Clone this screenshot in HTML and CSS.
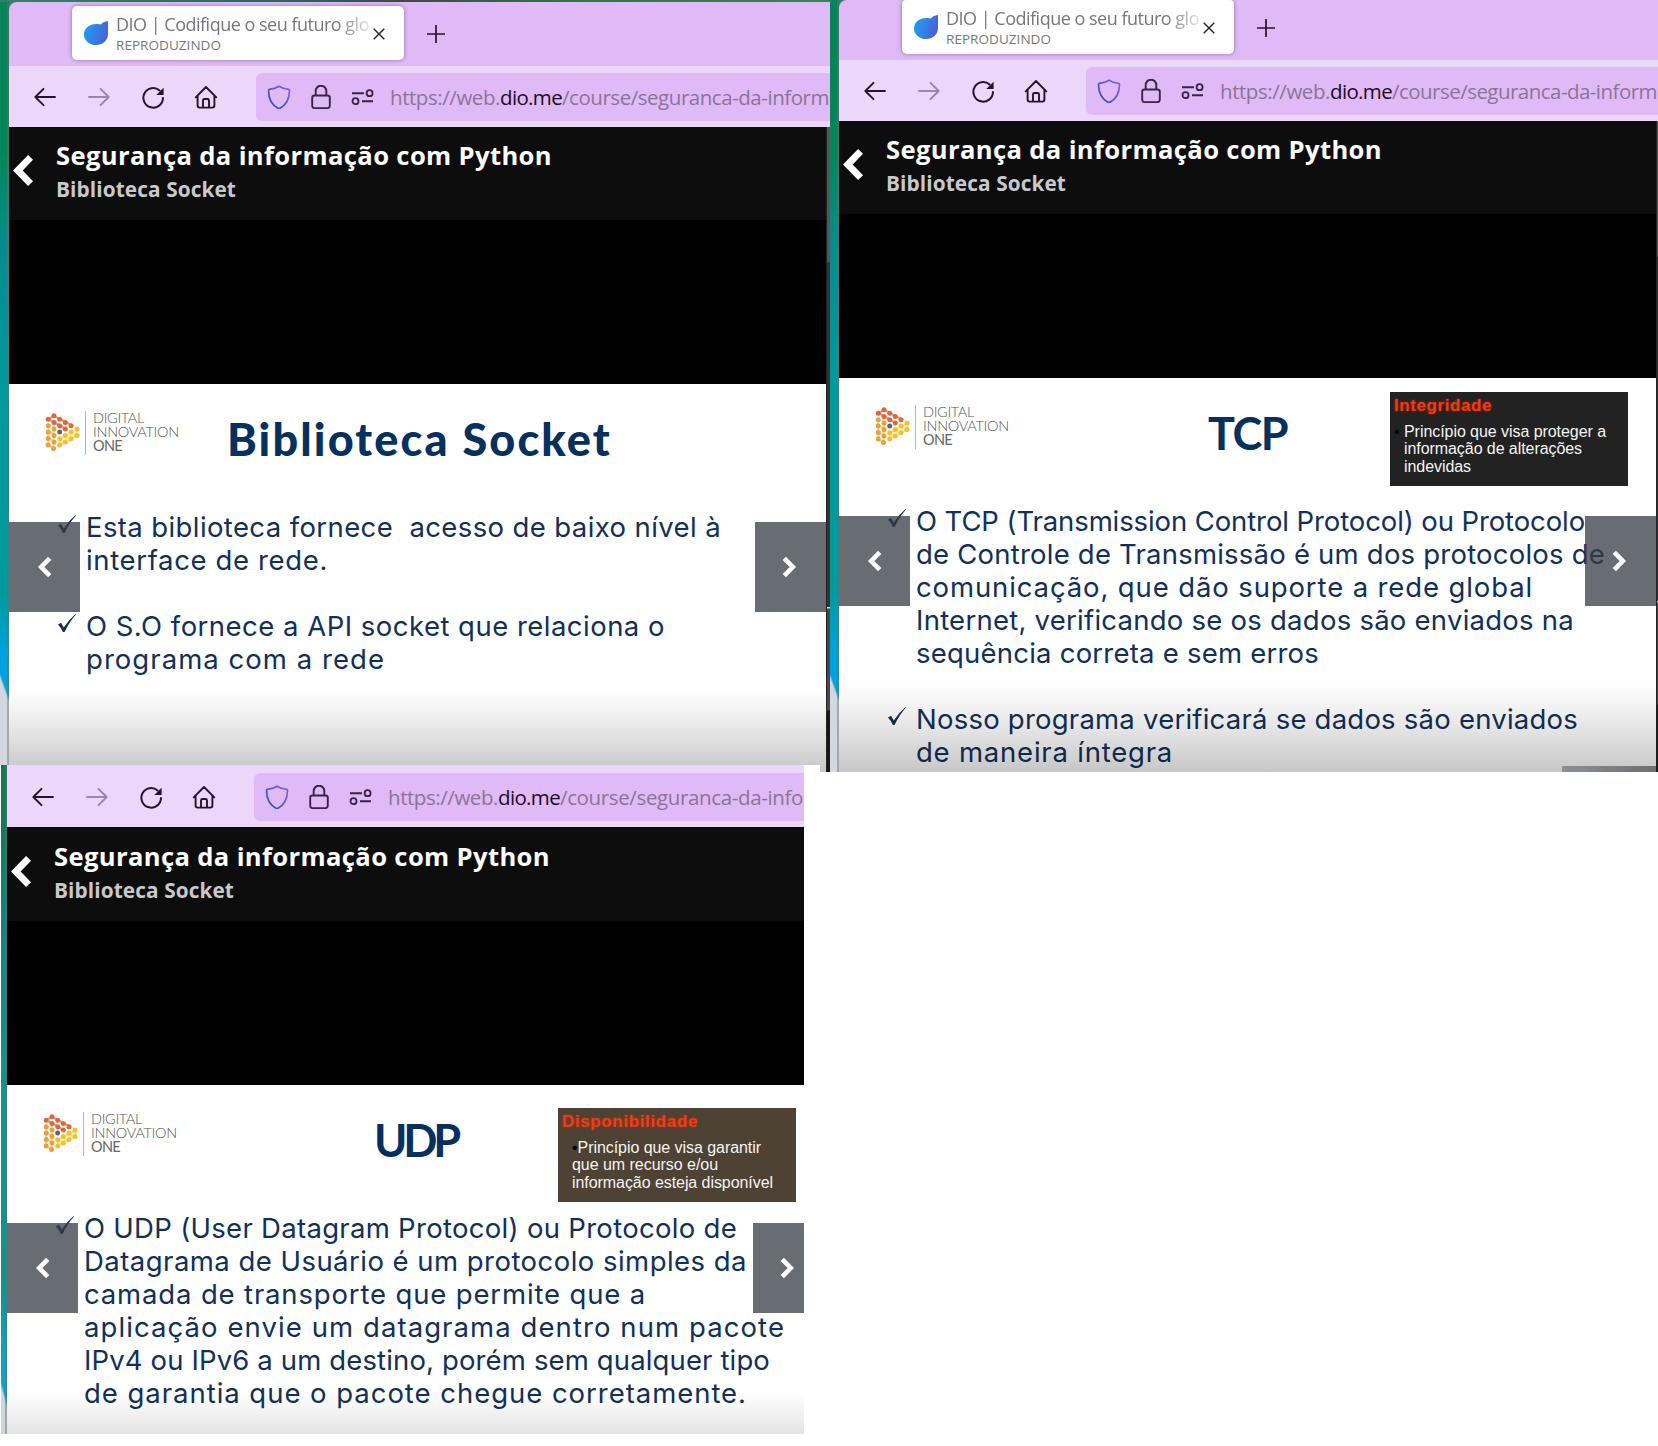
FILE: index.html
```html
<!DOCTYPE html>
<html lang="pt-BR">
<head>
<meta charset="utf-8">
<title>Segurança da informação com Python</title>
<link rel="stylesheet" href="styles.css">
</head>
<body>
<svg class="defs" aria-hidden="true">
  <defs>
    <linearGradient id="g-drop" x1="0" x2="1" y1="0.3" y2="0.6"><stop offset="0" stop-color="#1ea0f0"/><stop offset="1" stop-color="#4a5fd8"/></linearGradient>
    <linearGradient id="g-shield" x1="1" y1="0" x2="0.2" y2="0.8"><stop offset="0" stop-color="#8c62dc"/><stop offset="1" stop-color="#3550c4"/></linearGradient>
    <symbol id="drop" viewBox="0 0 24 24"><path fill="url(#g-drop)" d="M24 0V13C24 19.500 18.700 24 12 24S0 19.500 0 13.400S5.300 3 12 3C14 3 15.500 3.300 17 3.400C18.500 1.400 21 .3 24 0z"/></symbol>
    <symbol id="close" viewBox="0 0 12 12"><path d="M.7.7l10.600 10.600M11.300.7L.7 11.300" fill="none" stroke="#222" stroke-width="1.400"/></symbol>
    <symbol id="plus" viewBox="0 0 18 18"><path d="M9 0v18M0 9h18" fill="none" stroke="#24142c" stroke-width="1.700"/></symbol>
    <symbol id="back" viewBox="0 0 24 24"><path d="M22 12H2.500M10.500 3.800L2.300 12l8.200 8.200" fill="none" stroke="currentColor" stroke-width="1.900" stroke-linecap="round" stroke-linejoin="round"/></symbol>
    <symbol id="forward" viewBox="0 0 24 24"><path d="M2 12h19.500M13.500 3.800L21.700 12l-8.200 8.200" fill="none" stroke="currentColor" stroke-width="1.900" stroke-linecap="round" stroke-linejoin="round"/></symbol>
    <symbol id="reload" viewBox="0 0 24 24"><path d="M22 13a9.800 9.800 0 1 1-3.400-7.600" fill="none" stroke="currentColor" stroke-width="2" stroke-linecap="round"/><path d="M22.600 2.700v7.200h-7.300z" fill="currentColor"/></symbol>
    <symbol id="home" viewBox="0 0 24 24"><path d="M1.700 12.300L12 2l10.300 10.300M3.600 10.800v9.800q0 2 2 2h12.800q2 0 2-2v-9.800M9 22v-6.500q0-1.500 1.500-1.500h3q1.500 0 1.500 1.500V22" fill="none" stroke="currentColor" stroke-width="1.900" stroke-linecap="round" stroke-linejoin="round"/></symbol>
    <symbol id="shield" viewBox="0 0 24 24"><path d="M12 1.200C9 3.200 5.500 4 2.300 4.400Q1.500 4.600 1.500 5.500C1.600 13.500 5 20 11 23.200q1 .5 2 0C19 20 22.400 13.500 22.500 5.500q0-.9-.8-1.100C18.500 4 15 3.200 12 1.200z" fill="none" stroke="url(#g-shield)" stroke-width="1.700"/></symbol>
    <symbol id="lock" viewBox="0 0 24 24"><path d="M5.500 10.500h13q2.300 0 2.300 2.300v8q0 2.300-2.300 2.300h-13q-2.300 0-2.300-2.300v-8q0-2.300 2.300-2.300zM6.700 10.500V6a5.300 5.300 0 0 1 10.600 0v4.500" fill="none" stroke="#3a2344" stroke-width="1.900"/></symbol>
    <symbol id="perms" viewBox="0 0 24 24"><path d="M1 8.200h12M11 16.200h11" stroke="#3a2344" stroke-width="2"/><circle cx="18.600" cy="8.200" r="3" fill="none" stroke="#3a2344" stroke-width="1.800"/><circle cx="4.500" cy="16.200" r="3" fill="none" stroke="#3a2344" stroke-width="1.800"/></symbol>
    <symbol id="chev-left" viewBox="0 0 14 22"><path d="M11.700 2.300L3.200 11l8.500 8.700" fill="none" stroke="#fff" stroke-width="4.600"/></symbol>
    <symbol id="chev-right" viewBox="0 0 14 22"><path d="M2.300 2.300L10.800 11l-8.500 8.700" fill="none" stroke="#fff" stroke-width="4.600"/></symbol>
    <symbol id="check" viewBox="0 0 18 18"><path d="M0 10.500l3-1.700 2.800 4.700Q11 5.500 17.500 0l.5.500Q11.500 7.500 6.600 18H4.900Q3 13.500 0 10.500z" fill="#12305a"/></symbol>
    <symbol id="dio" viewBox="0 0 35 39">
      <path d="M3.200 6.200L9 2.800l19 10.200M3.200 6.200l18 10" stroke="#ee9470" stroke-width="2" fill="none"/>
      <path d="M3.200 12v20l5.500 3.500V9.500M3.200 18l5.500 3.500M3.200 25l5.500 3.500" stroke="#fbd08a" stroke-width="2" fill="none"/>
      <path d="M14.500 26l18-10v6.500l-18 10z" stroke="#ffe28a" stroke-width="2" fill="#fff0b4"/>
      <g fill="#dd6840"><circle cx="9" cy="2.800" r="2.500"/><circle cx="3.200" cy="6.200" r="2.500"/><circle cx="14.700" cy="6.200" r="2.500"/><circle cx="9" cy="9.500" r="2.500"/><circle cx="20.300" cy="9.500" r="2.500"/><circle cx="14.700" cy="12.700" r="2.500"/><circle cx="26" cy="12.700" r="2.500"/><circle cx="20.300" cy="16" r="2.500"/></g>
      <g fill="#e9a040"><circle cx="3.200" cy="12.700" r="2.500"/><circle cx="3.200" cy="19" r="2.500"/><circle cx="3.200" cy="25.500" r="2.500"/><circle cx="3.200" cy="32" r="2.500"/><circle cx="9" cy="16" r="2.500"/><circle cx="9" cy="22.500" r="2.500"/><circle cx="9" cy="29" r="2.500"/><circle cx="8.500" cy="35.500" r="2.500"/></g>
      <g fill="#efc233"><circle cx="32" cy="16" r="2.500"/><circle cx="26" cy="19" r="2.500"/><circle cx="20.300" cy="22.500" r="2.500"/><circle cx="14.700" cy="25.700" r="2.500"/><circle cx="32" cy="22.500" r="2.500"/><circle cx="26" cy="25.700" r="2.500"/><circle cx="20.300" cy="29" r="2.500"/><circle cx="14.700" cy="32" r="2.500"/></g>
      <circle cx="14.700" cy="19" r="2.500" fill="#6e5f6a"/>
    </symbol>
  </defs>
</svg>

<main class="board">
  <section class="shot shot-socket">
    <div class="desktop"></div>
    <div class="window">
      <div class="tabs">
        <div class="tab">
          <svg class="drop"><use href="#drop"/></svg>
          <div class="tab-text"><div class="tab-title"><span data-w="253">DIO | Codifique o seu futuro glo</span></div><div class="tab-state"><span data-w="105">REPRODUZINDO</span></div></div>
          <svg class="close"><use href="#close"/></svg>
        </div>
        <svg class="plus"><use href="#plus"/></svg>
      </div>
      <nav class="toolbar">
        <svg class="ico"><use href="#back"/></svg><svg class="ico off"><use href="#forward"/></svg><svg class="ico"><use href="#reload"/></svg><svg class="ico"><use href="#home"/></svg>
        <div class="urlbar"><svg class="ico"><use href="#shield"/></svg><svg class="ico"><use href="#lock"/></svg><svg class="ico"><use href="#perms"/></svg><div class="url"><span data-w="110">https://web.</span><b data-w="62">dio.me</b><span data-w="267">/course/seguranca-da-inform</span></div></div>
      </nav>
      <header class="course"><svg class="course-back"><use href="#chev-left"/></svg><div><h1><span data-w="496">Segurança da informação com Python</span></h1><h2><span data-w="180">Biblioteca Socket</span></h2></div></header>
      <div class="letterbox"></div>
      <article class="slide">
        <div class="slide-head">
          <div class="logo"><svg><use href="#dio"/></svg><div class="logo-text"><span data-w="51">DIGITAL</span><span data-w="86">INNOVATION</span><span class="one" data-w="29">ONE</span></div></div>
          <h3 class="title"><span data-w="385">Biblioteca Socket</span></h3>
        </div>
        <ul class="points">
          <li><svg><use href="#check"/></svg><p><span data-w="635">Esta biblioteca fornece &nbsp;acesso de baixo nível à</span><span data-w="242">interface de rede.</span></p></li>
          <li><svg><use href="#check"/></svg><p><span data-w="579">O S.O fornece a API socket que relaciona o</span><span data-w="299">programa com a rede</span></p></li>
        </ul>
        <div class="shade"></div>
        <div class="arrow prev"><svg><use href="#chev-left"/></svg></div>
        <div class="arrow next"><svg><use href="#chev-right"/></svg></div>
      </article>
      <div class="scrollbar"></div>
    </div>
  </section>

  <section class="shot shot-tcp">
    <div class="desktop"></div>
    <div class="window">
      <div class="tabs">
        <div class="tab">
          <svg class="drop"><use href="#drop"/></svg>
          <div class="tab-text"><div class="tab-title"><span data-w="253">DIO | Codifique o seu futuro glo</span></div><div class="tab-state"><span data-w="105">REPRODUZINDO</span></div></div>
          <svg class="close"><use href="#close"/></svg>
        </div>
        <svg class="plus"><use href="#plus"/></svg>
      </div>
      <nav class="toolbar">
        <svg class="ico"><use href="#back"/></svg><svg class="ico off"><use href="#forward"/></svg><svg class="ico"><use href="#reload"/></svg><svg class="ico"><use href="#home"/></svg>
        <div class="urlbar"><svg class="ico"><use href="#shield"/></svg><svg class="ico"><use href="#lock"/></svg><svg class="ico"><use href="#perms"/></svg><div class="url"><span data-w="110">https://web.</span><b data-w="62">dio.me</b><span data-w="265">/course/seguranca-da-inform</span></div></div>
      </nav>
      <header class="course"><svg class="course-back"><use href="#chev-left"/></svg><div><h1><span data-w="496">Segurança da informação com Python</span></h1><h2><span data-w="180">Biblioteca Socket</span></h2></div></header>
      <div class="letterbox"></div>
      <article class="slide">
        <div class="slide-head">
          <div class="logo"><svg><use href="#dio"/></svg><div class="logo-text"><span data-w="51">DIGITAL</span><span data-w="86">INNOVATION</span><span class="one" data-w="29">ONE</span></div></div>
          <h3 class="title"><span data-w="79">TCP</span></h3>
          <aside class="note"><h4><span data-w="98">Integridade</span></h4><p><span data-w="202">Princípio que visa proteger a</span><span data-w="178">informação de alterações</span><span data-w="67">indevidas</span></p></aside>
        </div>
        <ul class="points">
          <li><svg><use href="#check"/></svg><p><span data-w="669">O TCP (Transmission Control Protocol) ou Protocolo</span><span data-w="689">de Controle de Transmissão é um dos protocolos de</span><span data-w="617">comunicação, que dão suporte a rede global</span><span data-w="658">Internet, verificando se os dados são enviados na</span><span data-w="403">sequência correta e sem erros</span></p></li>
          <li><svg><use href="#check"/></svg><p><span data-w="662">Nosso programa verificará se dados são enviados</span><span data-w="257">de maneira íntegra</span></p></li>
        </ul>
        <div class="shade"></div>
        <div class="taskbar"></div>
        <div class="arrow prev"><svg><use href="#chev-left"/></svg></div>
        <div class="arrow next"><svg><use href="#chev-right"/></svg></div>
      </article>
      <div class="scrollbar"></div>
    </div>
  </section>

  <section class="shot shot-udp">
    <div class="desktop"></div>
    <div class="window">
      <nav class="toolbar">
        <svg class="ico"><use href="#back"/></svg><svg class="ico off"><use href="#forward"/></svg><svg class="ico"><use href="#reload"/></svg><svg class="ico"><use href="#home"/></svg>
        <div class="urlbar"><svg class="ico"><use href="#shield"/></svg><svg class="ico"><use href="#lock"/></svg><svg class="ico"><use href="#perms"/></svg><div class="url"><span data-w="110">https://web.</span><b data-w="62">dio.me</b><span data-w="243">/course/seguranca-da-info</span></div></div>
      </nav>
      <header class="course"><svg class="course-back"><use href="#chev-left"/></svg><div><h1><span data-w="496">Segurança da informação com Python</span></h1><h2><span data-w="180">Biblioteca Socket</span></h2></div></header>
      <div class="letterbox"></div>
      <article class="slide">
        <div class="slide-head">
          <div class="logo"><svg><use href="#dio"/></svg><div class="logo-text"><span data-w="51">DIGITAL</span><span data-w="86">INNOVATION</span><span class="one" data-w="29">ONE</span></div></div>
          <h3 class="title"><span data-w="83">UDP</span></h3>
          <aside class="note"><h4><span data-w="136">Disponibilidade</span></h4><p><span data-w="189"><i>•</i>Princípio que visa garantir</span><span data-w="146">que um recurso e/ou</span><span data-w="201">informação esteja disponível</span></p></aside>
        </div>
        <ul class="points">
          <li><svg><use href="#check"/></svg><p><span data-w="653">O UDP (User Datagram Protocol) ou Protocolo de</span><span data-w="663">Datagrama de Usuário é um protocolo simples da</span><span data-w="562">camada de transporte que permite que a</span><span data-w="701">aplicação envie um datagrama dentro num pacote</span><span data-w="686">IPv4 ou IPv6 a um destino, porém sem qualquer tipo</span><span data-w="663">de garantia que o pacote chegue corretamente.</span></p></li>
        </ul>
        <div class="shade"></div>
        <div class="arrow prev"><svg><use href="#chev-left"/></svg></div>
        <div class="arrow next"><svg><use href="#chev-right"/></svg></div>
      </article>
    </div>
  </section>
</main>
<script src="fit.js"></script>
</body>
</html>
```
FILE: fit.js
```js
// Tracks each line of text so that it fills the measure given in data-w.
document.querySelectorAll('[data-w]').forEach(function (el) {
  var natural = el.getBoundingClientRect().width;
  var count = Array.from(el.textContent).length;
  el.style.letterSpacing = ((el.dataset.w - natural) / count).toFixed(3) + 'px';
});
```
FILE: styles.css
```css
* { box-sizing: border-box; }
body { margin: 0; background: #fff; font-family: "Open Sans", sans-serif; overflow: hidden; }
h1, h2, h3, h4, p, ul { margin: 0; padding: 0; }
svg { display: block; flex: none; }
.defs { position: absolute; width: 0; height: 0; }
[data-w] { display: inline-block; white-space: pre; }

.board { display: grid; grid-template-columns: 830px 828px; grid-template-rows: 765px 681px; width: 1658px; height: 1446px; }
.shot { display: grid; grid-template-columns: 9px 1fr; overflow: hidden; position: relative; }
.shot-socket, .shot-tcp { height: 772px; background: linear-gradient(90deg, #3a8068, #286858 35%, #404848 48%, #337548 70%, #3b8260); }
.shot-socket { padding-top: 2px; }
.shot-tcp .tabs { height: 60px; padding-top: 0; }
.shot-tcp .tab { height: 54px; }
.shot-udp { width: 820px; height: 681px; padding-left: 1px; grid-template-columns: 6px 797px; background: #fff; z-index: 1; align-items: start; }

.desktop { height: 772px; border-right: 2px solid rgba(105, 110, 110, .45);
  background: linear-gradient(70deg, #d4d7e0 0 32px, transparent 34px) left bottom / 9px 97px no-repeat, linear-gradient(#078558 0 150px, #078b8c 240px, #009a9f 400px, #00999b 590px, #00a3dc 650px, #00a4e4); }
.shot-socket .desktop { height: 770px; }
.shot-udp .desktop { height: 669px; background: linear-gradient(75deg, #d0d4dc 0 12px, transparent 14px) left bottom / 6px 51px no-repeat, linear-gradient(#0e7c54 0 60px, #128286 150px, #109592 340px, #0d9390 520px, #10a0d0 590px, #10a0dc); }

.window { position: relative; min-width: 0; overflow: hidden; }
.shot-socket .window, .shot-tcp .window { border-top-left-radius: 8px; }
.shot-udp .window { height: 669px; }

.tabs { display: flex; height: 64px; padding: 4px 0 0 63px; background: #dfbaf6; }
.tab { display: flex; width: 332px; height: 54px; padding-left: 12px; background: #fff; border-radius: 5px; box-shadow: 0 0 4px rgba(60, 20, 80, .45); }
.shot-tcp .tab { border-radius: 4px 4px 5px 5px; }
.drop { width: 24px; height: 24px; margin-top: 15px; }
.tab-text { width: 254px; margin: 5px 0 0 8px; overflow: hidden; color: #77777b; }
.tab-title { height: 26px; line-height: 27px; font-size: 18px; -webkit-mask-image: linear-gradient(90deg, #000 220px, transparent 262px); mask-image: linear-gradient(90deg, #000 220px, transparent 262px); }
.tab-state { height: 18px; line-height: 17px; font-size: 13.500px; }
.close { width: 12px; height: 12px; margin: 22px 0 0 3px; }
.plus { width: 18px; height: 18px; margin: 19px 0 0 23px; }

.toolbar { display: flex; align-items: center; height: 61px; padding-left: 24px; gap: 30px; background: #ecd6f9; color: #24142c; }
.ico { width: 24px; height: 24px; }
.off { color: #9b86a6; }
.toolbar > .ico:nth-child(4) { margin-left: -1px; }
.urlbar { display: flex; align-items: center; flex: 1; min-width: 0; height: 48px; margin-left: 8px; padding: 0 0 0 11px; gap: 18px; overflow: hidden; border-radius: 6px 0 0 6px; background: #dfbaf6; }
.url { display: flex; line-height: 46px; margin-left: -3px; font-size: 20.500px; color: #8c7499; }
.url b { font-weight: 400; color: #1c0b26; }
.shot-udp .toolbar { height: 62px; padding-top: 2px; }

.course { display: flex; height: 93px; background: #0d0d0d; padding-left: 4px; }
.course-back { width: 21px; height: 33px; margin: 27px 22px 0 0; }
.course h1 { height: 36px; margin-top: 11px; line-height: 36px; font-size: 25.600px; color: #fff; }
.course h2 { height: 30px; line-height: 30px; font-size: 20.800px; color: #c9c9cb; }
.letterbox { height: 164px; background: #000; }

.slide { position: relative; height: 388px; overflow: hidden; background: #fff; color: #12305a; }
.shot-tcp .slide { height: 394px; }
.shot-udp .slide { height: 350px; }
.slide-head { display: flex; height: 127px; padding-left: 36px; }
.logo { display: flex; height: 44px; margin-top: 27px; width: 151px; flex: none; }
.logo svg { width: 35px; height: 39px; margin: 2px 5px 0 0; }
.logo-text { border-left: 1px solid #b5b5b5; padding-left: 7px; }
.logo-text span { display: block; width: max-content; line-height: 14px; font-family: Lato, sans-serif; font-size: 14.500px; font-weight: 300; color: #555; }
.logo-text .one { font-weight: 400; color: #666; }
.title { height: 60px; line-height: 60px; margin-top: 25px; font-family: Lato, sans-serif; font-size: 46px; color: #06305e; }
.shot-socket .title { margin-left: 31px; font-weight: 900; font-size: 45px; }
.shot-tcp .title { margin-left: 182px; font-size: 45px; }
.shot-udp .title { margin-left: 180px; font-size: 45px; }

.note { width: 238px; height: 94px; background: #222; font-family: "Liberation Sans", sans-serif; color: #f4f4f4; position: relative; }
.shot-tcp .note { margin: 14px 0 0 103px; }
.shot-udp .note { margin: 23px 0 0 101px; background: #4d4233; }
.note h4 { height: 26px; padding-left: 4px; line-height: 28px; font-size: 17px; color: #ee3c14; text-shadow: 0 0 3px rgba(255, 40, 0, .6); }
.note p { padding: 5px 0 0 14px; }
.note p span { display: block; width: max-content; line-height: 17.300px; font-size: 16px; }
.shot-tcp .note p::before { content: "•"; position: absolute; left: 4px; top: 31px; color: #000; font-size: 16px; line-height: 17px; }
.note i { color: #000; font-style: normal; }

.points { list-style: none; font-family: Inter, sans-serif; font-size: 27.500px; font-weight: 400; line-height: 33px; }
.points li { display: flex; padding-left: 49px; margin-bottom: 33px; }
.points svg { width: 18px; height: 18px; margin: 4px 10px 0 0; }
.points p span { display: block; width: max-content; }

.shade { position: absolute; inset: 306px 0 auto 0; height: 82px; background: linear-gradient(rgba(0,0,0,0), rgba(0,0,0,.1) 50%, rgba(0,0,0,.22)); }
.shot-tcp .shade { height: 88px; }
.arrow { position: absolute; top: 138px; width: 71px; height: 90px; background: rgba(54, 60, 68, .75); }
.arrow svg { width: 14px; height: 22px; margin: 34px 0 0 29px; }
.prev { left: 0; }
.next { left: 746px; }
.next svg { margin-left: 27px; }
.shot-udp .course { height: 94px; padding-top: 1px; }
.taskbar { position: absolute; right: 0; bottom: 0; width: 96px; height: 6px; background: linear-gradient(90deg, #8c9094, #6c6e70); }
.scrollbar { position: absolute; left: 817px; top: 125px; bottom: 0; width: 4px; border-left: 1px solid #222; background: linear-gradient(#555 0 135px, #333 136px 480px, #ddd 480px 481px, #484848 482px 583px, #181818 584px); }
.shot-tcp .scrollbar { top: 121px; width: 2px; }
```
